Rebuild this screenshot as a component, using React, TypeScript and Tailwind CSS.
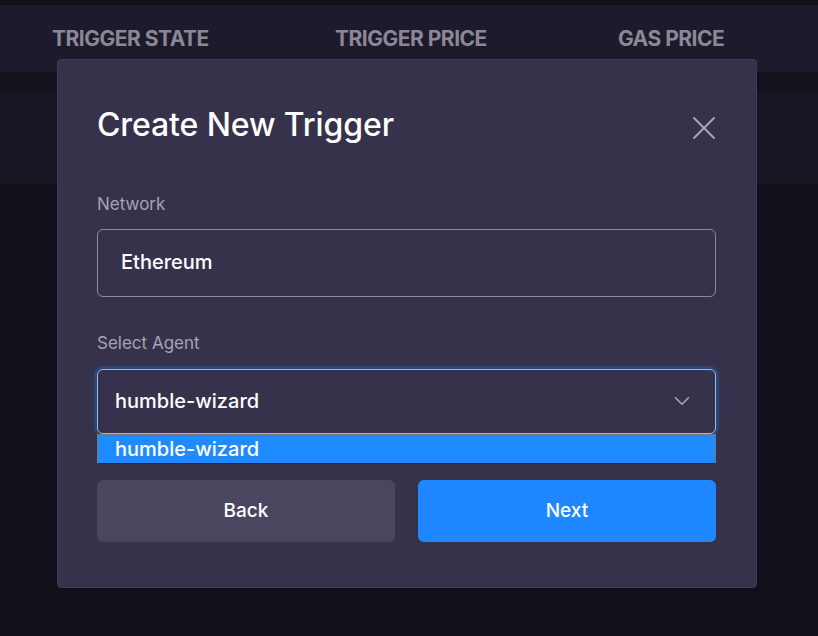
import { X, ChevronDown } from "lucide-react";

const font = { fontFamily: "Inter, 'Noto Sans', sans-serif" };

function HeaderCell({ label }: { label: string }) {
  return (
    <div className="w-[283px] shrink-0 text-[21px] font-bold tracking-[-0.5px] text-[#8b8894]">{label}</div>
  );
}

export default function App() {
  return (
    <div className="relative h-[636px] w-[818px] overflow-hidden bg-[#110f1a]" style={font}>
      {/* page behind the modal */}
      <div className="h-[5px] bg-[#12101b]" />
      <div className="flex h-[67px] items-center bg-[#1d1a2e] pl-[52px]">
        <HeaderCell label="TRIGGER STATE" />
        <HeaderCell label="TRIGGER PRICE" />
        <HeaderCell label="GAS PRICE" />
      </div>
      <div className="h-[20px] bg-[#13111c]" />
      <div className="h-[92px] bg-[#171522]" />

      {/* modal */}
      <div className="absolute left-[57px] top-[59px] h-[529px] w-[700px] rounded-[4px] border border-[#403c56] bg-[#36324b] pl-[39px] pr-[40px] pt-[45px]">
        <div className="flex h-[40px] items-center justify-between">
          <h1 className="text-[32px] font-medium tracking-[-0.1px] text-white">Create New Trigger</h1>
          <X className="mr-[-8px] mt-[6px] h-[40px] w-[40px] text-[#a9a6b8]" strokeWidth={1.15} />
        </div>

        <div className="mt-[47px] text-[17px] leading-[24px] text-[#a6a3b5]">Network</div>
        <div className="mt-[13px] flex h-[68px] items-center rounded-[6px] border border-[#8d89a0] px-[23px] pb-[3px] text-[20px] font-medium text-white">
          Ethereum
        </div>

        <div className="mt-[34px] text-[17px] leading-[24px] text-[#a6a3b5]">Select Agent</div>
        <div className="relative mt-[14px]">
          <div className="flex h-[65px] items-center justify-between rounded-[6px] border border-[#9cb9ea] pb-[1px] pl-[17px] pr-[20px] text-[20px] font-medium text-white shadow-[0_0_0_3px_#2d4775]">
            <span>humble-wizard</span>
            <ChevronDown className="h-[26px] w-[26px] text-[#a9a5b7]" strokeWidth={1.5} />
          </div>
          <div className="absolute left-0 right-0 top-[65px] flex h-[30px] items-center border border-[#77757f] border-b-[#2a2838] bg-[#1e8cff] pl-[17px] text-[20px] font-medium leading-none text-white">
            humble-wizard
          </div>
        </div>

        <div className="mt-[46px] grid h-[62px] grid-cols-2 gap-[23px]">
          <button className="rounded-[6px] bg-[#4b465f] text-[19px] font-medium text-white">Back</button>
          <button className="rounded-[6px] bg-[#1f87ff] text-[19px] font-medium text-white">Next</button>
        </div>
      </div>
    </div>
  );
}
